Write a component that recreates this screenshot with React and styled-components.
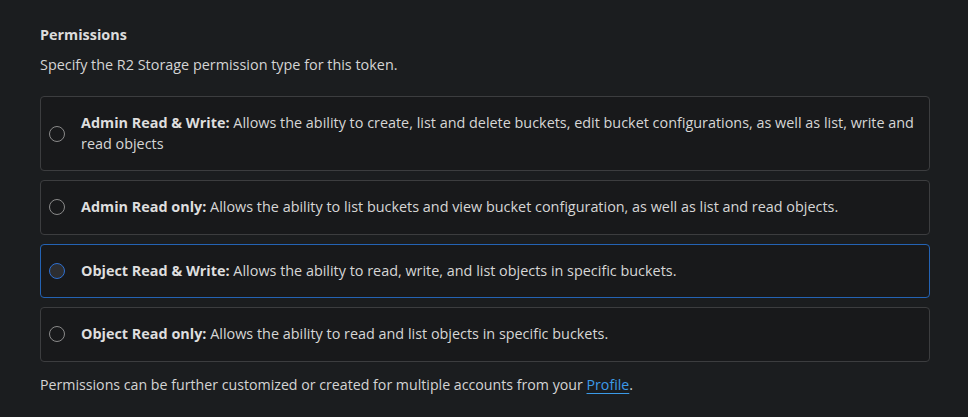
import React from 'react';
import styled, { createGlobalStyle } from 'styled-components';

const GlobalStyle = createGlobalStyle`
  body {
    margin: 0;
    background: #1b1d1f;
    font-family: "Open Sans", "Noto Sans", sans-serif;
    color: #d9d9d9;
  }
`;

const options = [
  {
    id: 'admin-rw',
    title: 'Admin Read & Write:',
    text: 'Allows the ability to create, list and delete buckets, edit bucket configurations, as well as list, write and read objects',
  },
  {
    id: 'admin-r',
    title: 'Admin Read only:',
    text: 'Allows the ability to list buckets and view bucket configuration, as well as list and read objects.',
  },
  {
    id: 'object-rw',
    title: 'Object Read & Write:',
    text: 'Allows the ability to read, write, and list objects in specific buckets.',
    selected: true,
  },
  {
    id: 'object-r',
    title: 'Object Read only:',
    text: 'Allows the ability to read and list objects in specific buckets.',
  },
];

function App() {
  return (
    <Page>
      <GlobalStyle />
      <Heading>Permissions</Heading>
      <Description>Specify the R2 Storage permission type for this token.</Description>
      <List>
        {options.map((o) => (
          <Option key={o.id} $selected={o.selected}>
            <Radio $selected={o.selected} />
            <Label>
              <strong>{o.title}</strong> {o.text}
            </Label>
          </Option>
        ))}
      </List>
      <Footer>
        Permissions can be further customized or created for multiple accounts from your{' '}
        <Link href="#">Profile</Link>.
      </Footer>
    </Page>
  );
}

export default App;

const Page = styled.div`
  padding: 25px 38px 0 40px;
  font-size: 14.4px;
`;

const Heading = styled.div`
  font-weight: 700;
  line-height: 20px;
  color: #dcdcdc;
`;

const Description = styled.div`
  margin-top: 10px;
  line-height: 20px;
  color: #d4d4d4;
`;

const List = styled.div`
  display: flex;
  flex-direction: column;
  gap: 9px;
  margin-top: 21px;
`;

const Option = styled.div`
  display: flex;
  align-items: center;
  gap: 16px;
  box-sizing: border-box;
  padding: 16px 6px 16px 8px;
  border: 1px solid ${(p) => (p.$selected ? '#2463b4' : '#3c3d3f')};
  border-radius: 4px;
  background: #18191b;
`;

const Radio = styled.span`
  flex: none;
  width: 16px;
  height: 16px;
  box-sizing: border-box;
  border-radius: 50%;
  border: 1px solid ${(p) => (p.$selected ? '#2e6fd0' : '#8a8a8a')};
  background: ${(p) => (p.$selected ? '#2d2e31' : 'transparent')};
`;

const Label = styled.div`
  line-height: 20.5px;
  color: #d6d6d6;

  strong {
    font-weight: 700;
    color: #dedede;
  }
`;

const Footer = styled.div`
  margin-top: 13px;
  font-size: 14.2px;
  line-height: 20px;
  color: #d4d4d4;
`;

const Link = styled.a`
  color: #3b9ae8;
  text-decoration: underline;
  text-underline-offset: 3px;
`;
